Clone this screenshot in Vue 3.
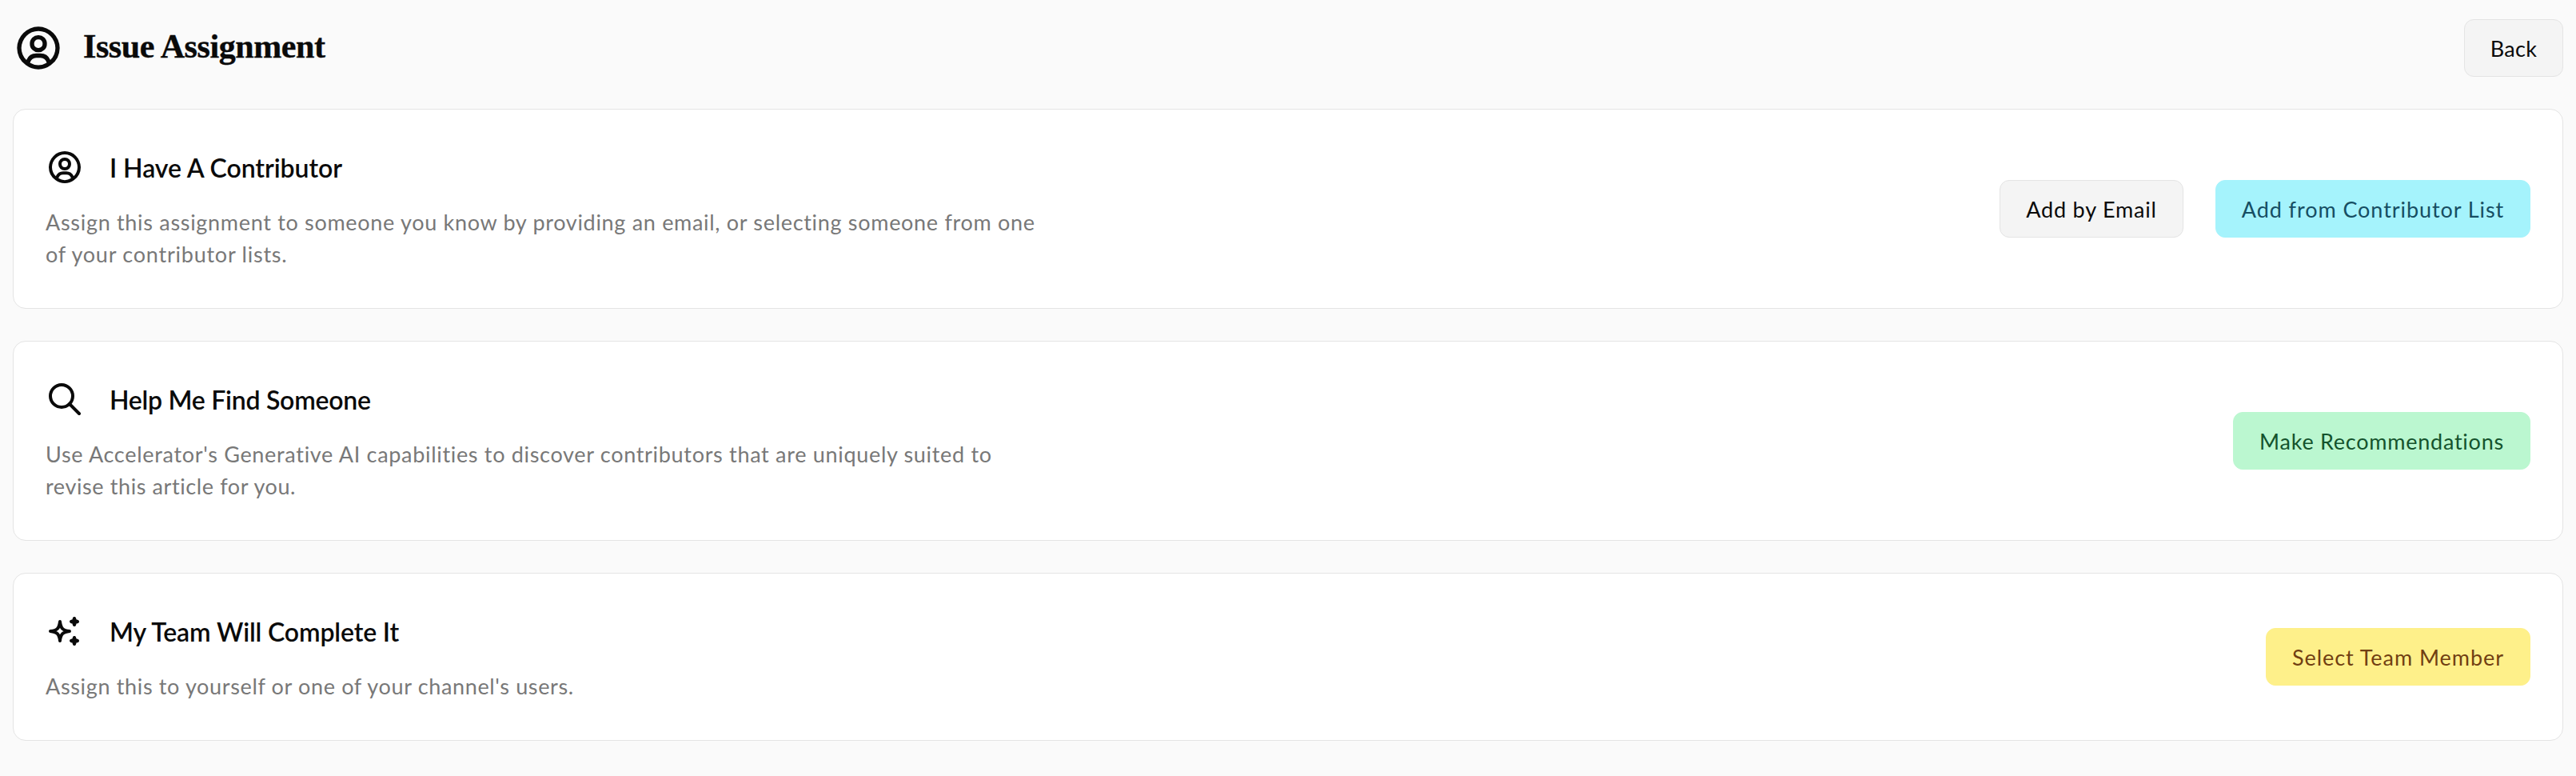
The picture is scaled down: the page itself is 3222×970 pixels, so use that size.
<script setup>
const cards = [
  {
    icon: 'user',
    title: 'I Have A Contributor',
    track: 'h-a',
    lines: [
      { text: 'Assign this assignment to someone you know by providing an email, or selecting someone from one', track: 'd-a' },
      { text: 'of your contributor lists.', track: 'd-b' }
    ],
    actions: [
      { label: 'Add by Email', kind: 'neutral email' },
      { label: 'Add from Contributor List', kind: 'cyan' }
    ]
  },
  {
    icon: 'search',
    title: 'Help Me Find Someone',
    track: 'h-b',
    lines: [
      { text: "Use Accelerator's Generative AI capabilities to discover contributors that are uniquely suited to", track: 'd-c' },
      { text: 'revise this article for you.', track: 'd-d' }
    ],
    actions: [{ label: 'Make Recommendations', kind: 'green' }]
  },
  {
    icon: 'sparkles',
    title: 'My Team Will Complete It',
    track: 'h-c',
    lines: [{ text: "Assign this to yourself or one of your channel's users.", track: 'd-e' }],
    actions: [{ label: 'Select Team Member', kind: 'yellow' }]
  }
]
const userRing = 'M12 2A10.13 10.13 0 0 0 2 12a10 10 0 0 0 4 7.92V20h.1a9.7 9.7 0 0 0 11.8 0h.1v-.08A10 10 0 0 0 22 12 10.13 10.13 0 0 0 12 2zM8.07 18.93A3 3 0 0 1 11 16.57h2a3 3 0 0 1 2.93 2.36 7.75 7.75 0 0 1-7.86 0zm9.54-1.29A5 5 0 0 0 13 14.57h-2a5 5 0 0 0-4.61 3.07A8 8 0 0 1 4 12a8.1 8.1 0 0 1 8-8 8.1 8.1 0 0 1 8 8 8 8 0 0 1-2.39 5.64z'
const userHead = 'M12 6a3.91 3.91 0 0 0-4 4 3.91 3.91 0 0 0 4 4 3.91 3.91 0 0 0 4-4 3.91 3.91 0 0 0-4-4zm0 6a1.91 1.91 0 0 1-2-2 1.91 1.91 0 0 1 2-2 1.91 1.91 0 0 1 2 2 1.91 1.91 0 0 1-2 2z'
</script>

<template>
  <main class="page">
    <header class="top">
      <div class="heading">
        <svg class="page-icon" viewBox="0 0 24 24" fill="currentColor">
          <path :d="userRing" />
          <path :d="userHead" />
        </svg>
        <h1>Issue Assignment</h1>
      </div>
      <button class="btn neutral back">Back</button>
    </header>

    <section v-for="card in cards" :key="card.title" class="card">
      <div class="info">
        <div class="card-head">
          <svg v-if="card.icon === 'user'" class="icon" viewBox="0 0 24 24" fill="currentColor">
            <path :d="userRing" />
            <path :d="userHead" />
          </svg>
          <svg v-else-if="card.icon === 'search'" class="icon line" viewBox="0 0 24 24">
            <circle cx="10" cy="10" r="7" />
            <path d="M15 15l6 6" />
          </svg>
          <svg v-else class="icon line" viewBox="0 0 24 24">
            <path d="M9 6C9.3 8.6 9.8 9.6 10.6 10.4C11.4 11.2 12.4 11.7 15 12C12.4 12.3 11.4 12.8 10.6 13.6C9.8 14.4 9.3 15.4 9 18C8.7 15.4 8.2 14.4 7.4 13.6C6.6 12.8 5.6 12.3 3 12C5.6 11.7 6.6 11.2 7.4 10.4C8.2 9.6 8.7 8.6 9 6Z" />
            <path class="solid" d="M18 4L18.5 5.5L20 6L18.5 6.5L18 8L17.5 6.5L16 6L17.5 5.5Z" />
            <path class="solid" d="M18 16L18.5 17.5L20 18L18.5 18.5L18 20L17.5 18.5L16 18L17.5 17.5Z" />
          </svg>
          <h2 :class="card.track">{{ card.title }}</h2>
        </div>
        <p>
          <span v-for="line in card.lines" :key="line.text" :class="line.track">{{ line.text }}</span>
        </p>
      </div>
      <div class="actions">
        <button v-for="a in card.actions" :key="a.label" class="btn" :class="a.kind">{{ a.label }}</button>
      </div>
    </section>
  </main>
</template>

<style>
body { background: #fafafa; }
</style>

<style scoped>
.page {
  box-sizing: border-box;
  width: 3222px;
  height: 970px;
  padding: 24px 16px 0;
  display: flex;
  flex-direction: column;
  gap: 40px;
  overflow: hidden;
  background: #fafafa;
  color: #0a0a0a;
  font-family: Lato, "Liberation Sans", sans-serif;
}
.top { display: flex; justify-content: space-between; align-items: center; height: 72px; }
.heading { display: flex; align-items: center; gap: 24px; }
.page-icon { width: 64px; height: 64px; }
h1 {
  margin: 0;
  padding-bottom: 5px;
  font: bold 42px/50px "Liberation Serif", serif;
  letter-spacing: -0.42px;
  -webkit-text-stroke: 0.4px currentColor;
}
.card {
  box-sizing: border-box;
  display: flex;
  justify-content: space-between;
  align-items: center;
  padding: 48px 40px;
  border: 1px solid #e4e4e4;
  border-radius: 16px;
  background: #fff;
}
.info { display: flex; flex-direction: column; gap: 24px; }
.card-head { display: flex; align-items: center; gap: 32px; height: 48px; }
.icon { width: 48px; height: 48px; }
.line { fill: none; stroke: currentColor; stroke-width: 2; stroke-linecap: round; stroke-linejoin: round; }
.solid { fill: currentColor; }
h2 { margin: 0; padding-top: 2px; font-size: 32px; line-height: 48px; font-weight: 600; white-space: nowrap; }
p { margin: 1px 0 -1px; font-size: 27px; line-height: 40px; color: #787878; }
p span { display: block; white-space: nowrap; }
.h-a { letter-spacing: -0.05px; }
.h-b { letter-spacing: -0.25px; }
.h-c { letter-spacing: -0.13px; }
.d-a { letter-spacing: 0.69px; }
.d-b { letter-spacing: 0.76px; }
.d-c { letter-spacing: 0.69px; }
.d-d { letter-spacing: 0.6px; }
.d-e { letter-spacing: 0.65px; }
.actions { display: flex; gap: 40px; }
.btn {
  box-sizing: border-box;
  height: 72px;
  padding: 2px 0 0;
  border: 1px solid transparent;
  border-radius: 12px;
  font-family: inherit;
  font-size: 27px;
  line-height: 40px;
  text-align: center;
  white-space: nowrap;
  color: #0a0a0a;
}
.neutral { background: #f4f4f4; border-color: #e4e4e4; }
.back { width: 124px; letter-spacing: 0.3px; }
.email { width: 230px; letter-spacing: 0.82px; }
.cyan { width: 394px; background: #a5f3fc; border-color: #a5f3fc; color: #164e63; letter-spacing: 0.93px; }
.green { width: 372px; background: #bbf7d0; border-color: #bbf7d0; color: #14532d; letter-spacing: 0.75px; }
.yellow { width: 331px; background: #fef08a; border-color: #fef08a; color: #713f12; letter-spacing: 0.95px; }
</style>
